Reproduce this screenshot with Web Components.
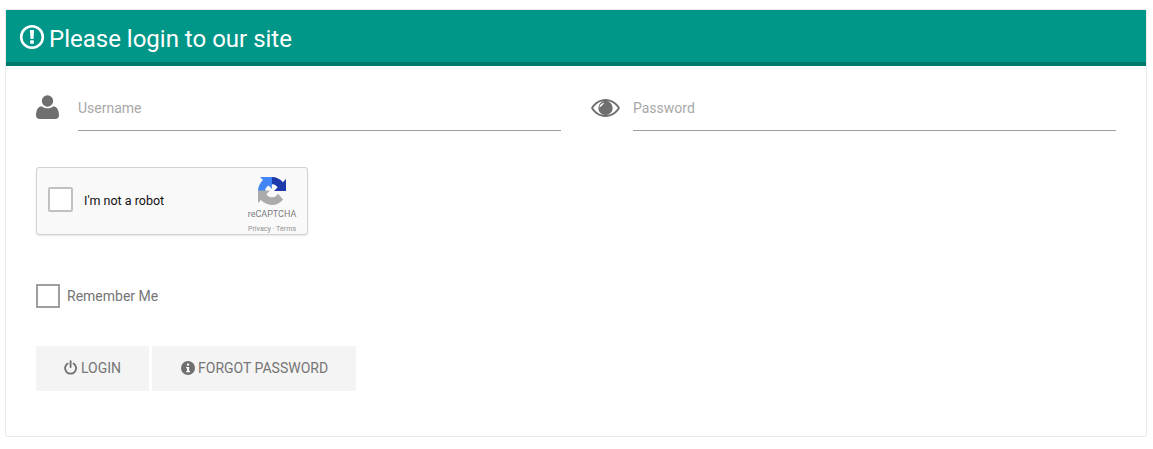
<!DOCTYPE html>
<html>
<head>
<meta charset="utf-8">
<title>Login</title>
<style>
  html, body { margin: 0; background: #fff; }
  body { font-family: Roboto, "Liberation Sans", sans-serif; }
</style>
</head>
<body>
<login-panel heading="Please login to our site">
  <text-field label="Username" icon="user"></text-field>
  <text-field label="Password" icon="eye"></text-field>
  <robot-check slot="captcha"></robot-check>
  <remember-check slot="remember">Remember Me</remember-check>
  <action-button slot="actions" icon="power">LOGIN</action-button>
  <action-button slot="actions" icon="info">FORGOT PASSWORD</action-button>
</login-panel>

<script>
  const ICONS = {
    user: `<svg width="23" height="24" viewBox="0 0 23 24" style="margin-left:-.5px"><circle cx="11.500" cy="6" r="5.700" fill="#6f6f6f"/><path d="M0 20.500c0-5.800 2.300-9 5.700-9.300 1.400 1.300 3.500 2.100 5.800 2.100s4.400-.8 5.800-2.100c3.400.3 5.700 3.500 5.700 9.300 0 2.300-1.500 3.500-3.600 3.500H3.600C1.500 24 0 22.800 0 20.500z" fill="#6f6f6f"/></svg>`,
    eye: `<svg width="29" height="18" viewBox="0 0 29 18" style="margin:4px 0 0 -.5px"><path fill-rule="evenodd" d="M14.500 0C8.300 0 3 3.500 0 9c3 5.500 8.300 9 14.500 9S26 14.500 29 9C26 3.500 20.700 0 14.500 0zM14.500 2c5.300 0 9.800 2.800 12.300 7-2.500 4.200-7 7-12.300 7S4.700 13.200 2.200 9c2.500-4.200 7-7 12.300-7z" fill="#6f6f6f"/><circle cx="14.500" cy="9" r="7.200" fill="#6f6f6f"/><path d="M13.300 3.800c-2.700.4-4.600 2.300-5 4.800 1.700-1 3.800-2.600 5-4.800z" fill="#fff"/></svg>`,
    power: `<svg width="14" height="15" viewBox="0 0 14 15" style="margin-top:-1px"><path d="M3.600 3.600a5.500 5.500 0 1 0 6 0" fill="none" stroke="#6f6f6f" stroke-width="1.800" stroke-linecap="round"/><path d="M6.600 1.200v5.800" stroke="#6f6f6f" stroke-width="1.800" stroke-linecap="round"/></svg>`,
    info: `<svg width="15" height="14" viewBox="0 0 15 14" style="margin-top:-1px"><circle cx="8" cy="7" r="7" fill="#6f6f6f"/><rect x="6.900" y="2.600" width="2.200" height="2" fill="#fff"/><path d="M6.200 5.900h2.900v4h.9v1.300H6.200V9.900h.9V7.200h-.9z" fill="#fff"/></svg>`
  };

  class LoginPanel extends HTMLElement {
    constructor() {
      super();
      const shadow = this.attachShadow({ mode: 'open' });
      shadow.innerHTML = `
        <style>
          :host {
            display: block;
            box-sizing: border-box;
            width: 1142px;
            height: 428px;
            margin: 9px 0 0 5px;
            border: 1px solid #e9e9e9;
            border-radius: 2px;
            background: #fff;
          }
          .head {
            box-sizing: border-box;
            height: 56px;
            padding: 6px 0 0 13px;
            display: flex;
            align-items: center;
            gap: 4px;
            background: #009688;
            border-bottom: 4px solid #00796b;
            color: #fff;
            font-size: 24px;
            line-height: 28px;
          }
          .head svg { display: block; margin-top: -4px; }
          .body { padding: 0 30px; }
          .fields {
            display: grid;
            grid-template-columns: 525px 525px;
            gap: 30px;
            padding-top: 21px;
          }
          .captcha { padding-top: 36px; }
          .remember { padding-top: 49px; }
          .actions { display: flex; gap: 3px; padding-top: 38px; }
        </style>
        <div class="head">
          <svg width="26" height="26" viewBox="0 0 26 26">
            <circle cx="13" cy="13" r="10.800" fill="none" stroke="#fff" stroke-width="2.600"/>
            <path d="M10.900 6h4.200l-.6 9h-3z" fill="#fff"/>
            <rect x="11.200" y="16.300" width="3.600" height="3.500" rx=".5" fill="#fff"/>
          </svg>
          <span id="title"></span>
        </div>
        <div class="body">
          <div class="fields"><slot></slot></div>
          <div class="captcha"><slot name="captcha"></slot></div>
          <div class="remember"><slot name="remember"></slot></div>
          <div class="actions"><slot name="actions"></slot></div>
        </div>
      `;
    }

    connectedCallback() {
      this.shadowRoot.querySelector('#title').textContent = this.getAttribute('heading') || '';
    }
  }

  class TextField extends HTMLElement {
    constructor() {
      super();
      const shadow = this.attachShadow({ mode: 'open' });
      shadow.innerHTML = `
        <style>
          :host { display: flex; height: 44px; }
          .icon { width: 42px; flex: none; padding-top: 8px; box-sizing: border-box; }
          svg { display: block; }
          .line {
            flex: 1;
            box-sizing: border-box;
            border-bottom: 1px solid #9e9e9e;
            color: #a8a8a8;
            font-size: 14px;
            line-height: 16px;
            padding-top: 13px;
          }
        </style>
        <div class="icon"></div>
        <div class="line"></div>
      `;
    }

    connectedCallback() {
      this.shadowRoot.querySelector('.icon').innerHTML = ICONS[this.getAttribute('icon')] || '';
      this.shadowRoot.querySelector('.line').textContent = this.getAttribute('label') || '';
    }
  }

  class RobotCheck extends HTMLElement {
    constructor() {
      super();
      const shadow = this.attachShadow({ mode: 'open' });
      shadow.innerHTML = `
        <style>
          :host {
            display: flex;
            box-sizing: border-box;
            width: 272px;
            height: 68px;
            align-items: flex-start;
            background: #f9f9f9;
            border: 1px solid #d3d3d3;
            border-radius: 3px;
            box-shadow: 0 1px 2px rgba(0,0,0,.1);
            font-family: Roboto, "Liberation Sans", sans-serif;
          }
          .box {
            box-sizing: border-box;
            width: 25px;
            height: 25px;
            margin: 19px 0 0 11px;
            background: #fff;
            border: 2px solid #c1c1c1;
            border-radius: 2px;
            flex: none;
          }
          .text { margin: 25px 0 0 11px; font-size: 12.500px; line-height: 15px; color: #111; flex: 1; }
          .brand {
            width: 50px;
            margin-right: 10px;
            padding-top: 9px;
            display: flex;
            flex-direction: column;
            align-items: center;
            color: #7d7d7d;
          }
          svg { display: block; }
          .name { font-size: 9px; line-height: 11px; margin-top: 4px; white-space: nowrap; }
          .links { font-size: 7.100px; line-height: 9px; margin-top: 4px; color: #909090; white-space: nowrap; }
        </style>
        <div class="box"></div>
        <div class="text">I'm not a robot</div>
        <div class="brand">
          <svg width="28" height="28" viewBox="0 0 64 64">
            <path d="M64 31.955l-.033-1.37V4.687l-7.16 7.16C50.948 4.674 42.033.093 32.05.093c-10.4 0-19.622 4.96-25.458 12.64l11.736 11.86a15.550 15.550 0 0 1 4.754-5.334c2.050-1.600 4.952-2.906 8.968-2.906.485 0 .860.057 1.135.163 4.976.393 9.288 3.140 11.828 7.125l-8.307 8.307c10.522-.04 22.410-.066 27.840-.093" fill="#1c3aa9"/>
            <path d="M31.862 0l-1.370.033H4.594l7.160 7.160C4.580 13.052 0 21.967 0 31.950c0 10.400 4.960 19.622 12.640 25.458l11.860-11.736a15.550 15.550 0 0 1-5.334-4.754c-1.600-2.050-2.906-4.952-2.906-8.968 0-.485.057-.860.163-1.135.393-4.976 3.140-9.288 7.125-11.828l8.307 8.307c-.04-10.522-.066-22.410-.093-27.840" fill="#4285f4"/>
            <path d="M.001 31.955l.033 1.370v25.900l7.160-7.160c5.860 7.173 14.775 11.754 24.760 11.754 10.390 0 19.614-4.960 25.450-12.640L45.668 38.320a15.550 15.550 0 0 1-4.754 5.334c-2.027 1.600-4.927 2.906-8.943 2.906-.485 0-.860-.057-1.135-.163-4.976-.393-9.288-3.140-11.828-7.125l8.307-8.307c-10.522.001-22.400.026-27.314-.002" fill="#ababab"/>
          </svg>
          <div class="name">reCAPTCHA</div>
          <div class="links">Privacy · Terms</div>
        </div>
      `;
    }
  }

  class RememberCheck extends HTMLElement {
    constructor() {
      super();
      const shadow = this.attachShadow({ mode: 'open' });
      shadow.innerHTML = `
        <style>
          :host {
            display: flex;
            align-items: center;
            gap: 7px;
            height: 24px;
            color: #757575;
            font-size: 14px;
          }
          .box {
            box-sizing: border-box;
            width: 24px;
            height: 24px;
            border: 2px solid #9e9e9e;
          }
        </style>
        <div class="box"></div>
        <slot></slot>
      `;
    }
  }

  class ActionButton extends HTMLElement {
    constructor() {
      super();
      const shadow = this.attachShadow({ mode: 'open' });
      shadow.innerHTML = `
        <style>
          :host {
            display: flex;
            align-items: center;
            gap: 3px;
            height: 45px;
            padding: 0 28px;
            background: #f4f4f4;
            color: #757575;
            font-size: 14px;
            line-height: 16px;
          }
          .icon { display: flex; margin-top: -1px; }
          .label { margin-top: -1px; }
        </style>
        <span class="icon"></span>
        <span class="label"><slot></slot></span>
      `;
    }

    connectedCallback() {
      this.shadowRoot.querySelector('.icon').innerHTML = ICONS[this.getAttribute('icon')] || '';
    }
  }

  customElements.define('login-panel', LoginPanel);
  customElements.define('text-field', TextField);
  customElements.define('robot-check', RobotCheck);
  customElements.define('remember-check', RememberCheck);
  customElements.define('action-button', ActionButton);
</script>
</body>
</html>
